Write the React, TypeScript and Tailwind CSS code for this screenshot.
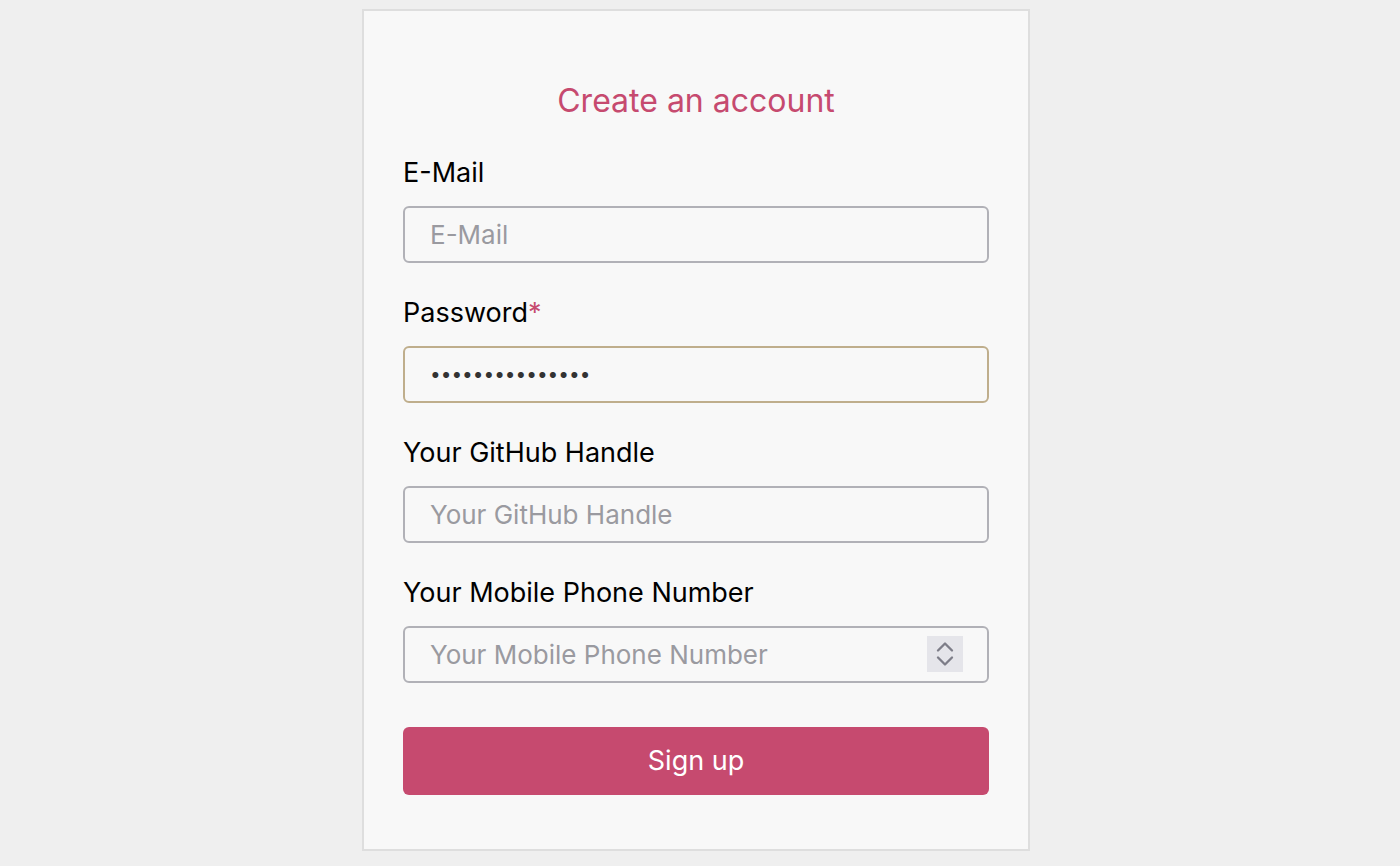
import { ChevronUp, ChevronDown } from "lucide-react";

const fields = [
  { label: "E-Mail", placeholder: "E-Mail", type: "email" },
  { label: "Password", placeholder: "Password", type: "password", required: true, value: "secretpassword1" },
  { label: "Your GitHub Handle", placeholder: "Your GitHub Handle", type: "text" },
  { label: "Your Mobile Phone Number", placeholder: "Your Mobile Phone Number", type: "text", spinner: true },
];

export default function App() {
  return (
    <div className="min-h-[866px] bg-[#efefef] flex justify-center pt-[9px] pr-[8px] font-['Inter',sans-serif]">
      <div className="w-[668px] h-[842px] bg-[#f8f8f8] border-2 border-[#dedede] px-[39px] pt-[70px]">
        <h1 className="text-center text-[32px] leading-[40px] text-[#c64a6f]">Create an account</h1>
        <form className="mt-[34px]" onSubmit={(e) => e.preventDefault()}>
          {fields.map((f) => (
            <div key={f.label} className="mb-[32px]">
              <label className="block text-[27px] leading-[36px] text-black mb-[15px]">
                {f.label}
                {f.required && <span className="text-[#c64a6f]">*</span>}
              </label>
              <div className="relative">
                <input
                  type={f.type}
                  placeholder={f.placeholder}
                  defaultValue={f.value}
                  readOnly
                  className={
                    "w-full h-[57px] rounded-[6px] border-2 bg-[#f8f8f8] px-[25px] text-[#333] placeholder:text-[#9a9aa0] outline-none " +
                    (f.required ? "border-[#bfae8c] text-[19px]" : "border-[#b1b1b7] text-[26px]")
                  }
                />
                {f.spinner && (
                  <div className="absolute right-[26px] top-[10px] w-[36px] h-[36px] bg-[#e5e5ea] flex flex-col items-center justify-center text-[#7d7d88]">
                    <ChevronUp size={28} strokeWidth={2} className="-mb-[7px] shrink-0" />
                    <ChevronDown size={28} strokeWidth={2} className="-mt-[7px] shrink-0" />
                  </div>
                )}
              </div>
            </div>
          ))}
          <button
            type="submit"
            className="w-full h-[68px] mt-[12px] rounded-[6px] bg-[#c64a6f] text-white text-[27px]"
          >
            Sign up
          </button>
        </form>
      </div>
    </div>
  );
}
